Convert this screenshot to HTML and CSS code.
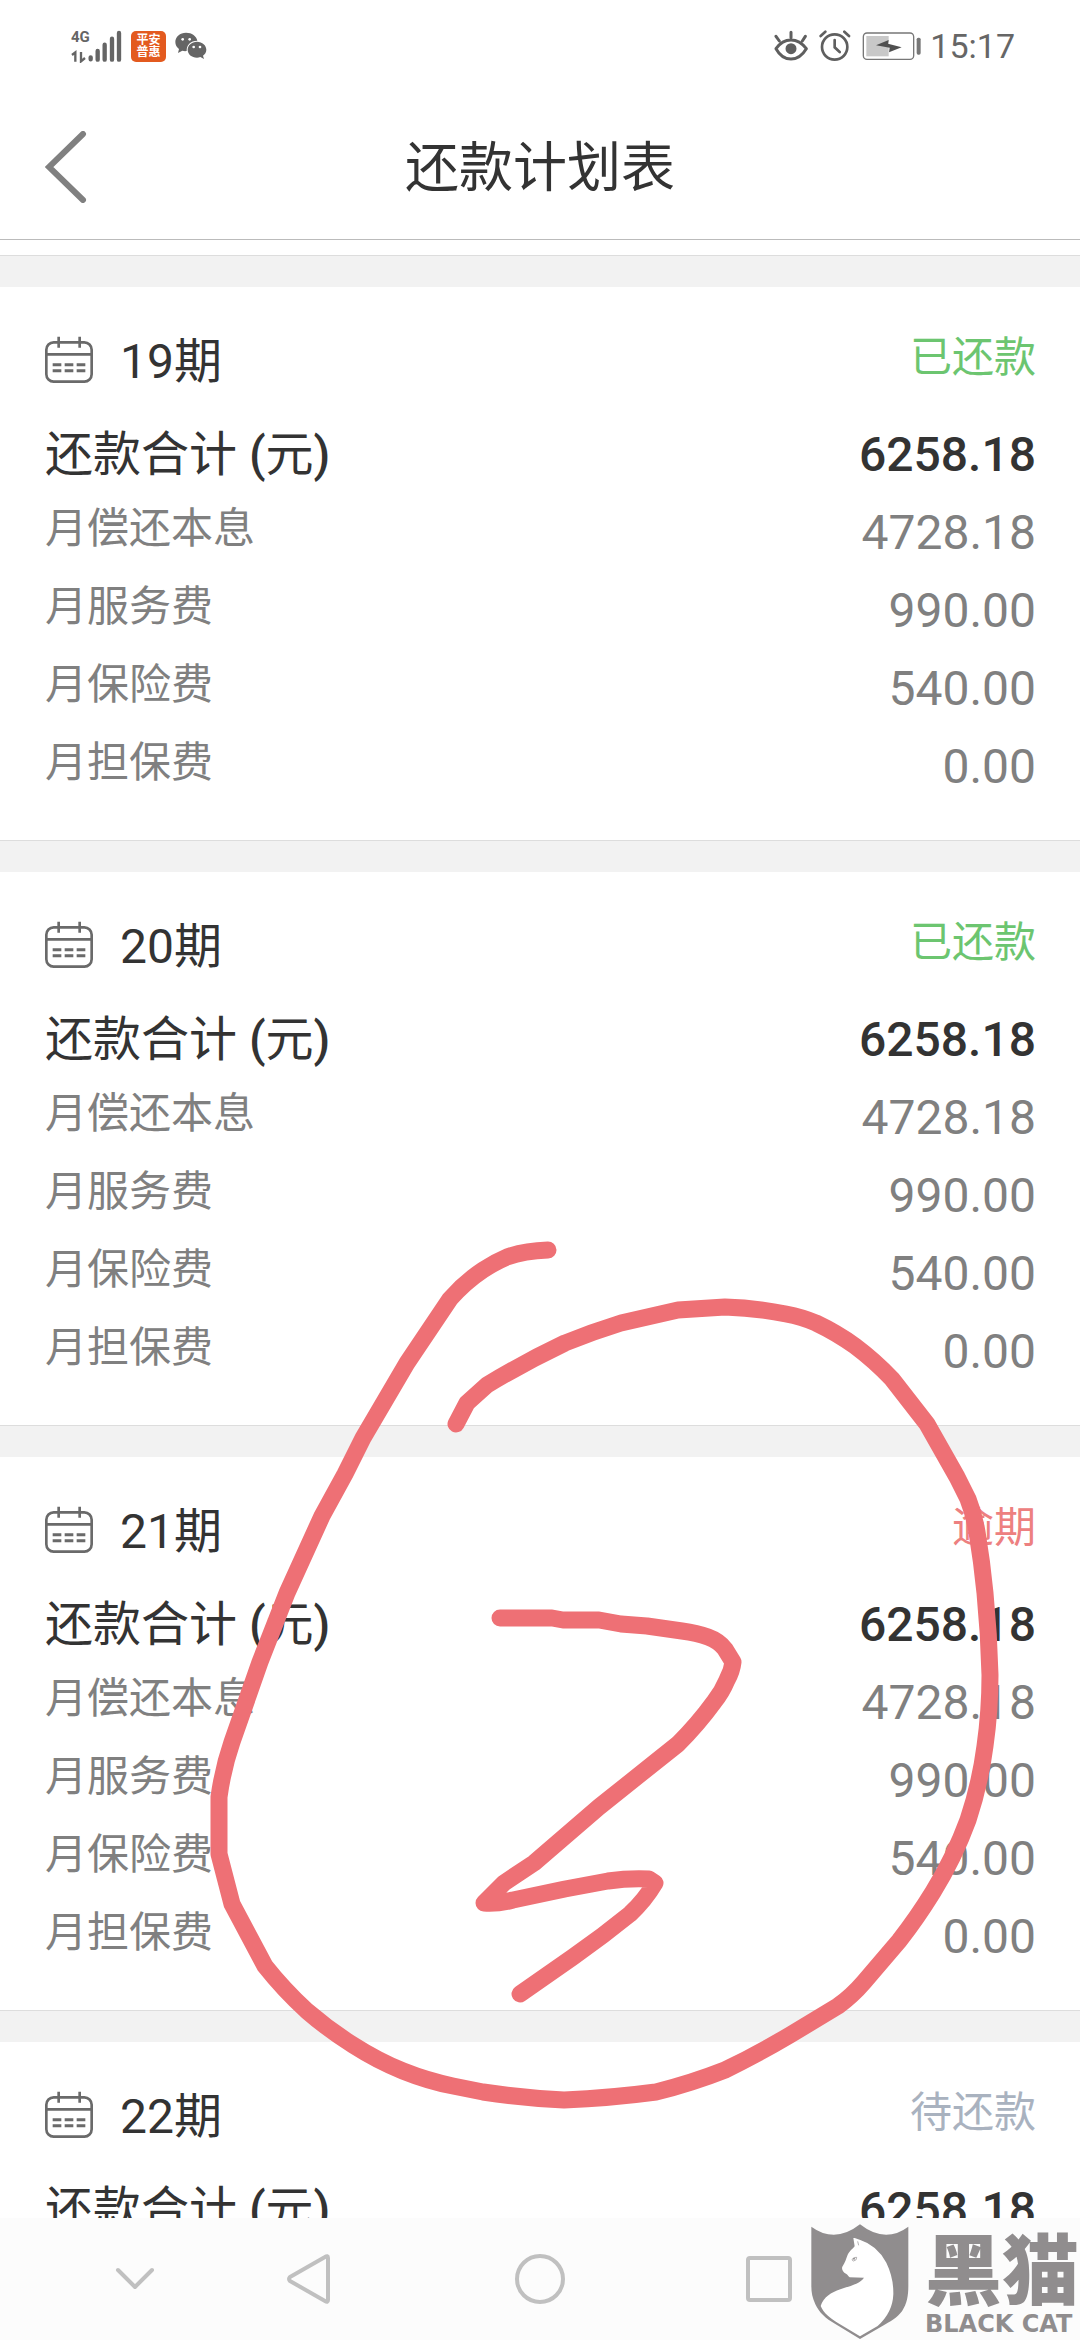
FILE: index.html
```html
<!DOCTYPE html>
<html lang="zh-CN">
<head>
<meta charset="utf-8">
<meta name="viewport" content="width=device-width, initial-scale=1">
<title>还款计划表</title>
<link rel="stylesheet" href="styles.css">
</head>
<body>
<svg class="defs" aria-hidden="true">
  <symbol id="calendar" viewBox="0 0 144 141">
    <g fill="none" stroke="#6a6a6a">
      <rect x="4" y="19" width="136" height="118" rx="22" stroke-width="8"/>
      <path d="M3 55H141M41 2v33M104 2v33" stroke-width="8"/>
      <path d="M23 86H49M59 86H85M95 86H121M23 104H49M59 104H85M95 104H121" stroke-width="9"/>
    </g>
  </symbol>
</svg>
<div class="app">
  <div class="status-bar">
    <div class="status-group">
      <div class="network">
        <span class="network-type">4G</span>
        <svg width="51" height="33" viewBox="64 56 153 99" fill="none" stroke="#656565" aria-hidden="true">
          <path d="M67 131l10-8v28M94 122v28l12-10" stroke-width="7"/>
          <path d="M123 138v6M144 119v26M165 100v45M187 82v63M208 65v80" stroke-width="13" stroke-linecap="round"/>
        </svg>
      </div>
      <div class="app-badge"><span>平安</span><span>普惠</span></div>
      <svg class="wechat" width="32" height="28" viewBox="373 67 96 84" aria-hidden="true">
        <path fill="#656565" d="M406 69c-18 0-32 12-32 28 0 9 4 16 11 21l-3 12 13-7c4 1 8 2 13 1-1-17 11-31 32-31-3-14-16-24-34-24z"/>
        <path fill="#656565" d="M439 96c-16 0-28 11-28 24s12 24 28 24c3 0 7-1 10-2l11 6-3-10c6-4 10-11 10-18 0-13-12-24-28-24z"/>
        <g fill="#fff"><circle cx="396" cy="89" r="4"/><circle cx="417" cy="89" r="4"/><circle cx="429" cy="112" r="4"/><circle cx="448" cy="112" r="4"/></g>
      </svg>
    </div>
    <div class="status-group status-right">
      <svg width="34" height="32" viewBox="64 58 102 96" fill="none" stroke="#5f5f5f" stroke-width="9" stroke-linecap="round" stroke-linejoin="round" aria-hidden="true">
        <path d="M70 114c12-17 28-26 45-26s33 9 46 26c-12 20-28 31-46 31s-34-11-45-31zM115 65v16M70 77l10 14M158 77l-9 14"/>
        <circle cx="115" cy="114" r="12" fill="#5f5f5f"/>
      </svg>
      <svg width="32" height="32" viewBox="199 58 96 96" fill="none" stroke="#5f5f5f" stroke-width="8" stroke-linecap="round" aria-hidden="true">
        <circle cx="246" cy="109" r="38"/><path d="M246 88v22l15 14M204 76l14-13M289 76l-14-13"/>
      </svg>
      <svg class="battery" width="60" height="32" viewBox="334 58 180 96" aria-hidden="true">
        <rect x="338" y="67" width="151" height="79" rx="11" fill="none" stroke="#777" stroke-width="4"/>
        <rect x="347" y="76" width="67" height="61" fill="#c8c8c8"/>
        <path d="M376 104l38-16-2 11 41 11-38 15 2-14z" fill="#505050"/>
        <rect x="498" y="81" width="12" height="51" rx="5" fill="#777"/>
      </svg>
      <time class="clock">15:17</time>
    </div>
  </div>

  <header class="title-bar">
    <button class="back" type="button" aria-label="返回">
      <svg width="42" height="72" viewBox="0 0 42 72" fill="none" stroke="#808080" stroke-width="6" stroke-linecap="round" aria-hidden="true"><path d="M38 3L4 36l34 33"/></svg>
    </button>
    <h1>还款计划表</h1>
  </header>

  <main class="plan">
    <div class="plan-top"></div>

    <section class="card">
      <div class="card-head">
        <svg class="calendar" aria-hidden="true"><use href="#calendar"/></svg>
        <h2>19期</h2><span class="state paid">已还款</span>
      </div>
      <dl>
        <div class="row total"><dt>还款合计 <b>(</b>元<b>)</b></dt><dd>6258.18</dd></div>
        <div class="row"><dt>月偿还本息</dt><dd>4728.18</dd></div>
        <div class="row"><dt>月服务费</dt><dd>990.00</dd></div>
        <div class="row"><dt>月保险费</dt><dd>540.00</dd></div>
        <div class="row"><dt>月担保费</dt><dd>0.00</dd></div>
      </dl>
    </section>

    <section class="card">
      <div class="card-head">
        <svg class="calendar" aria-hidden="true"><use href="#calendar"/></svg>
        <h2>20期</h2><span class="state paid">已还款</span>
      </div>
      <dl>
        <div class="row total"><dt>还款合计 <b>(</b>元<b>)</b></dt><dd>6258.18</dd></div>
        <div class="row"><dt>月偿还本息</dt><dd>4728.18</dd></div>
        <div class="row"><dt>月服务费</dt><dd>990.00</dd></div>
        <div class="row"><dt>月保险费</dt><dd>540.00</dd></div>
        <div class="row"><dt>月担保费</dt><dd>0.00</dd></div>
      </dl>
    </section>

    <section class="card">
      <div class="card-head">
        <svg class="calendar" aria-hidden="true"><use href="#calendar"/></svg>
        <h2>21期</h2><span class="state overdue">逾期</span>
      </div>
      <dl>
        <div class="row total"><dt>还款合计 <b>(</b>元<b>)</b></dt><dd>6258.18</dd></div>
        <div class="row"><dt>月偿还本息</dt><dd>4728.18</dd></div>
        <div class="row"><dt>月服务费</dt><dd>990.00</dd></div>
        <div class="row"><dt>月保险费</dt><dd>540.00</dd></div>
        <div class="row"><dt>月担保费</dt><dd>0.00</dd></div>
      </dl>
    </section>

    <section class="card">
      <div class="card-head">
        <svg class="calendar" aria-hidden="true"><use href="#calendar"/></svg>
        <h2>22期</h2><span class="state pending">待还款</span>
      </div>
      <dl>
        <div class="row total"><dt>还款合计 <b>(</b>元<b>)</b></dt><dd>6258.18</dd></div>
      </dl>
    </section>
  </main>

  <nav class="system-nav" aria-label="系统导航">
    <button type="button" aria-label="收起"><svg width="42" height="26" viewBox="0 0 42 26"><path d="M4 4l17 17L38 4"/></svg></button>
    <button type="button" aria-label="返回"><svg width="46" height="52" viewBox="0 0 46 52"><path d="M42 5v42q0 3-3 1L4 28q-2-2 0-4L39 4q3-2 3 1z"/></svg></button>
    <button type="button" aria-label="主页"><svg width="52" height="52" viewBox="0 0 52 52"><circle cx="26" cy="26" r="23"/></svg></button>
    <button type="button" aria-label="最近任务"><svg width="48" height="48" viewBox="0 0 48 48"><rect x="3" y="3" width="42" height="42" rx="2"/></svg></button>
  </nav>

  <svg class="ink" viewBox="0 0 1080 2340" aria-hidden="true">
    <path d="M548 1250Q524 1251 507 1257Q495 1262 483 1270Q465 1282 450 1299L407 1363L363 1438L345 1474L322 1516L287 1593L260 1662L232 1742Q223 1768 219 1797V1854L232 1904L265 1966Q284 1990 307 2011Q329 2030 353 2045Q378 2061 403 2071Q428 2081 453 2086L483 2092Q523 2098 564 2100Q611 2098 656 2092Q692 2083 725 2070Q758 2054 790 2035L838 2006Q852 1996 864 1982L899 1941Q917 1918 933 1892Q954 1858 968 1820Q980 1784 985 1746Q990 1711 990 1675Q989 1634 985 1593Q982 1562 977 1532Q974 1514 968 1499L957 1477L927 1424L892 1379Q875 1361 855 1346Q837 1333 816 1323Q802 1317 786 1314Q756 1308 725 1307L678 1310L621 1323Q592 1332 565 1343Q525 1362 487 1385L467 1403L456 1424"/>
    <path d="M500 1618H552L563 1620H599L621 1624L647 1626L682 1631Q697 1633 708 1637Q719 1641 725 1649L733 1662Q732 1671 727 1680Q722 1692 714 1702Q698 1724 678 1744L599 1807L534 1863L504 1883L484 1903Q498 1904 513 1900L565 1889L608 1881Q629 1878 649 1879L655 1883Q645 1900 630 1914Q603 1936 573 1957L520 1994"/>
  </svg>

  <div class="watermark">
    <svg width="98" height="116" viewBox="152 134 294 348" aria-hidden="true">
      <path fill="#908d8e" d="M153 142Q224 194 299 135Q374 194 444 142V320C444 350 440 372 425 396C410 416 390 427 365 441L299 479L225 434C195 417 177 400 165 375C156 355 153 340 153 320z"/>
      <path fill="#fff" d="M283 176L300 182Q350 198 378 250Q400 295 399 345Q397 400 352 440L299 471L234 432C208 416 190 401 181 380C190 353 212 340 240 330C272 319 300 312 311 295L268 294C264 291 262 286 257 283C248 279 243 270 246 262C255 248 257 239 262 226C270 212 278 208 283 201L279 176z"/>
      <path fill="none" stroke="#908d8e" stroke-width="2" d="M275 240q8-8 14-6q1 9-9 11q-4 0-5-5zM292 186l3 12"/><circle cx="281" cy="238" r="3" fill="#908d8e"/>
    </svg>
    <div class="watermark-name"><strong>黑猫</strong><span>BLACK CAT</span></div>
  </div>
</div>
</body>
</html>
```
FILE: styles.css
```css
* { box-sizing: border-box; }

body {
  margin: 0;
  background: #fff;
  color: #333;
  font-family: Roboto, "Noto Sans CJK SC", sans-serif;
}

h1, h2, dl, dt, dd { margin: 0; font-weight: 400; }

button {
  display: flex;
  align-items: center;
  justify-content: center;
  padding: 0;
  border: 0;
  background: none;
}

svg { display: block; flex: none; }

.defs { position: absolute; width: 0; height: 0; }

.app {
  position: relative;
  display: flex;
  flex-direction: column;
  height: 100vh;
  overflow: hidden;
}

/* Phone status bar */
.status-bar {
  display: flex;
  flex: none;
  justify-content: space-between;
  height: 94px;
  padding: 0 65px 2px 71px;
}

.status-group { display: flex; align-items: center; gap: 9px; }
.status-right { gap: 11px; }

.network { position: relative; }

.network-type {
  position: absolute;
  top: 0;
  left: 0;
  font-size: 15px;
  font-weight: 700;
  line-height: 15px;
  color: #656565;
}

.app-badge {
  display: flex;
  flex-direction: column;
  align-items: center;
  justify-content: center;
  width: 35px;
  height: 31px;
  border-radius: 5px;
  background: #e35a1f;
  color: #fff;
  font-size: 12px;
  font-weight: 700;
  line-height: 12px;
}

.battery { margin-right: -3px; }

.clock {
  font-size: 34px;
  line-height: 40px;
  color: #666;
}

/* Page title */
.title-bar {
  display: grid;
  flex: none;
  grid-template-columns: 1fr auto 1fr;
  align-items: center;
  height: 146px;
  padding: 0 45px;
  border-bottom: 1px solid #bbb;
}

.back { justify-self: start; }

h1 { padding-top: 4px; font-size: 54px; line-height: 72px; }

/* Repayment plan */
.plan {
  flex: 1;
  min-height: 0;
  overflow: hidden;
  background: #f2f2f2;
}

.plan-top {
  height: 16px;
  border-bottom: 1px solid #ddd;
  background: #fff;
}

.card {
  margin-top: 31px;
  padding: 36px 44px 34px 45px;
  border-bottom: 1px solid #ddd;
  background: #fff;
}

.card-head {
  display: flex;
  align-items: flex-start;
  height: 78px;
  margin-bottom: 15px;
}

.calendar { width: 48px; height: 47px; margin: 13px 27px 0 0; }

h2 { flex: 1; font-size: 48px; line-height: 78px; }

.state { font-size: 42px; line-height: 70px; }
.paid { color: #6cc570; }
.overdue { color: #ed8080; }
.pending { color: #a9b2bf; }

.row {
  display: flex;
  align-items: flex-start;
  justify-content: space-between;
  height: 78px;
  color: #808080;
}

.row dt { font-size: 42px; line-height: 70px; }
.row dd { font-size: 48px; line-height: 78px; }

.total { color: #333; }
.total dt { font-size: 48px; line-height: 78px; }
.total b,
.total dd { font-weight: 500; }

/* Phone navigation keys */
.system-nav {
  display: grid;
  flex: none;
  grid-template-columns: 174fr 174fr 288fr 170fr 226fr;
  height: 122px;
  padding-left: 48px;
  background: #fcfcfc;
}

.system-nav svg {
  fill: none;
  stroke: #c0c0c0;
  stroke-width: 4;
  stroke-linecap: round;
  stroke-linejoin: round;
}

/* Hand-drawn mark over the list */
.ink {
  position: absolute;
  top: 0;
  left: 0;
  width: 100%;
  fill: none;
  stroke: #ee7075;
  stroke-width: 17;
  stroke-linecap: round;
  stroke-linejoin: round;
  pointer-events: none;
}

.watermark {
  position: absolute;
  right: 0;
  bottom: 0;
  display: flex;
  gap: 16px;
  color: #908d8e;
  pointer-events: none;
}

.watermark-name { display: flex; flex-direction: column; width: 155px; }

.watermark-name strong {
  font-family: "Noto Sans CJK SC", sans-serif;
  font-size: 77px;
  font-weight: 900;
  line-height: 84px;
}

.watermark-name span {
  font-family: "DejaVu Sans", sans-serif;
  font-size: 24px;
  font-weight: 700;
  line-height: 32px;
  white-space: nowrap;
}
```
